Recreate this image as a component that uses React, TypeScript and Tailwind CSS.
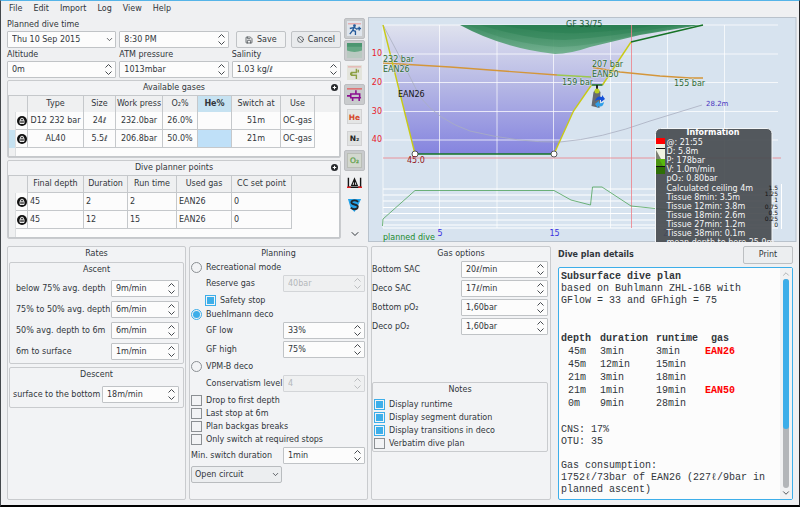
import React from "react";
import { Ban, ChevronDown, ChevronUp, Save } from "lucide-react";

const menus = ["File", "Edit", "Import", "Log", "View", "Help"];

function Spin({ id, value, disabled = false, label }: { id: string; value: string; disabled?: boolean; label?: string }) {
  return (
    <div
      className={
        "flex h-[17px] w-full min-w-0 items-center rounded-[1px] border pr-[3px] pl-1 " +
        (disabled ? "border-[#d3d5d8] bg-[#eff0f1] text-[#b4b7ba]" : "border-[#c0c3c6] bg-[#fcfcfc] text-[#31363b]")
      }
    >
      <input id={id} aria-label={label} defaultValue={value} disabled={disabled} className="w-full min-w-0 flex-1 bg-transparent outline-none" />
      <span className="flex flex-col gap-[3px]">
        <button type="button" aria-label="Increase" disabled={disabled} className="block">
          <svg viewBox="0 0 7 4" className="block h-1 w-[7px]" fill="none" stroke="currentColor" strokeWidth=".9"><path d="M.5 3.500l3-3 3 3" /></svg>
        </button>
        <button type="button" aria-label="Decrease" disabled={disabled} className="block">
          <svg viewBox="0 0 7 4" className="block h-1 w-[7px]" fill="none" stroke="currentColor" strokeWidth=".9"><path d="M.5 .5l3 3 3-3" /></svg>
        </button>
      </span>
    </div>
  );
}

function Field({ id, label, value }: { id: string; label: string; value: string }) {
  return (
    <div className="flex flex-col gap-px">
      <label htmlFor={id} className="leading-[11px]">{label}</label>
      <Spin id={id} value={value} />
    </div>
  );
}

function Group({ title, className = "", children, add = false }: { title: string; className?: string; children?: React.ReactNode; add?: boolean }) {
  return (
    <section className={"min-w-0 rounded-[2px] border border-[#c9cbce] bg-[#f2f3f5] " + className}>
      <div className="relative h-[14px] text-center leading-[14px]">
        <h2>{title}</h2>
        {add && (
          <button type="button" aria-label={"Add to " + title} className="absolute top-[3px] right-[2px]">
            <svg viewBox="0 0 16 16" className="size-[7px]">
              <circle cx="8" cy="8" r="8" fill="#26292c" />
              <path d="M8 4v8M4 8h8" stroke="#fff" strokeWidth="2.5" />
            </svg>
          </button>
        )}
      </div>
      {children}
    </section>
  );
}

function Check({ id, label, checked = false }: { id: string; label: string; checked?: boolean }) {
  return (
    <div className="flex h-[13px] items-center gap-1">
      <input
        id={id}
        type="checkbox"
        defaultChecked={checked}
        className="size-[11px] shrink-0 appearance-none border border-[#8b8f93] bg-clip-content p-px checked:border-[#3daee9] checked:bg-[#3daee9]"
      />
      <label htmlFor={id} className="whitespace-nowrap">{label}</label>
    </div>
  );
}

function Radio({ id, label, checked = false }: { id: string; label: string; checked?: boolean }) {
  return (
    <div className="flex h-[13px] items-center gap-1">
      <input
        id={id}
        type="radio"
        name="deco-mode"
        defaultChecked={checked}
        className="size-[11px] shrink-0 appearance-none rounded-full border border-[#8b8f93] bg-clip-content p-px checked:border-[#3daee9] checked:bg-[#3daee9]"
      />
      <label htmlFor={id}>{label}</label>
    </div>
  );
}

function Trash() {
  return (
    <button type="button" aria-label="Remove row" className="mx-auto block">
      <svg viewBox="0 0 20 20" className="size-[10px]">
        <circle cx="10" cy="10" r="10" fill="#111" />
        <path d="M6 8.500h8v6.500h-8zM7 8V6.500q0-2 3-2t3 2v1.500" fill="none" stroke="#fff" strokeWidth="1.800" />
        <path d="M10 10v4" stroke="#fff" strokeWidth="1.500" />
      </svg>
    </button>
  );
}

const line = "border-r border-b border-[#c5c8cb] ";

function GasTable() {
  const rows = [
    ["D12 232 bar", "24ℓ", "232.0bar", "26.0%", "", "51m", "OC-gas"],
    ["AL40", "5.5ℓ", "206.8bar", "50.0%", "", "21m", "OC-gas"],
  ];
  return (
    <table className="w-full table-fixed border-separate border-spacing-0 border border-[#c5c8cb] bg-[#fcfcfc] text-center whitespace-nowrap">
      <colgroup>
        <col className="w-[7px]" /><col className="w-3" /><col className="w-[56px]" /><col className="w-8" /><col className="w-[47px]" />
        <col className="w-[35px]" /><col className="w-[34px]" /><col className="w-[49px]" /><col className="w-[34px]" /><col />
      </colgroup>
      <thead>
        <tr className="h-[16px]">
          <th className="bg-[#eff0f1]" /><th className="border-r border-[#c5c8cb] bg-[#eff0f1]" />
          {["Type", "Size", "Work press", "O₂%", "He%", "Switch at", "Use"].map((h) => (
            <th key={h} className={"overflow-hidden border-r border-[#c5c8cb] p-0 " + (h === "He%" ? "bg-[#c6e2f1] font-bold" : "bg-[#eff0f1] font-normal")}>
              <span className="-mx-2">{h}</span>
            </th>
          ))}
          <th className="bg-[#eff0f1]" />
        </tr>
      </thead>
      <tbody>
        {rows.map((r, i) => (
          <tr key={r[0]} className="h-[18px]">
            <td className={"border-r border-[#dcdee0] p-0 " + (i === 1 ? "bg-[#c6e2f1]" : "bg-[#eff0f1]")} />
            <td className={line + "p-0"}><Trash /></td>
            {r.map((c, j) => (
              <td key={j} className={line + "p-0 " + (i === 1 && j === 4 ? "bg-[#bfe0f8]" : "")}>{c}</td>
            ))}
            <td />
          </tr>
        ))}
        <tr className="h-2"><td className="border-r border-[#dcdee0] bg-[#eff0f1] p-0" /><td colSpan={9} className="p-0" /></tr>
      </tbody>
    </table>
  );
}

function PointsTable() {
  const rows = [
    ["45", "2", "2", "EAN26", "0"],
    ["45", "12", "15", "EAN26", "0"],
  ];
  return (
    <table className="w-full table-fixed border-separate border-spacing-0 border border-[#c5c8cb] bg-[#fcfcfc] text-left whitespace-nowrap">
      <colgroup>
        <col className="w-[7px]" /><col className="w-3" /><col className="w-[56px]" /><col className="w-[44px]" /><col className="w-[49px]" />
        <col className="w-[55px]" /><col className="w-[60px]" /><col />
      </colgroup>
      <thead>
        <tr className="h-[17px]">
          <th className="bg-[#eff0f1]" /><th className="border-r border-[#c5c8cb] bg-[#eff0f1]" />
          {["Final depth", "Duration", "Run time", "Used gas", "CC set point"].map((h) => (
            <th key={h} className="border-r border-b border-[#c5c8cb] bg-[#eff0f1] p-0 text-center font-normal">{h}</th>
          ))}
          <th className="border-b border-[#dcdee0] bg-[#eff0f1]" />
        </tr>
      </thead>
      <tbody>
        {rows.map((r, i) => (
          <tr key={i} className="h-[18px]">
            <td className="border-r border-[#dcdee0] bg-[#eff0f1] p-0" />
            <td className={line + "p-0"}><Trash /></td>
            {r.map((c, j) => (
              <td key={j} className={line + "p-0 pl-[2px]"}>{c}</td>
            ))}
            <td />
          </tr>
        ))}
        <tr className="h-2"><td className="border-r border-[#dcdee0] bg-[#eff0f1] p-0" /><td colSpan={7} className="p-0" /></tr>
      </tbody>
    </table>
  );
}

function Tool({ label, pressed = false, children }: { label: string; pressed?: boolean; children: React.ReactNode }) {
  return (
    <button
      type="button"
      aria-label={label}
      aria-pressed={pressed}
      className={"flex h-[21px] w-[21px] items-center justify-center rounded-[2px] border " + (pressed ? "border-[#bcbec1] bg-[#c9cbcd]" : "border-transparent")}
    >
      <svg viewBox="0 0 16 16" className="size-[15px]">{children}</svg>
    </button>
  );
}

function Toolbar() {
  return (
    <nav aria-label="Profile options" className="flex flex-col items-center gap-px pt-px">
      <Tool label="Calculated ceiling steps" pressed>
        <rect width="16" height="16" fill="#dfe5ec" />
        <path d="M1 3h14" stroke="#e89090" />
        <circle cx="8" cy="5" r="1.500" fill="#245a9a" />
        <path d="M8 6l-2 4 3 1v4M6 10l-3 4M7 7l-4 1M8 7l3 2M11 8h4M13 6v4" stroke="#245a9a" strokeWidth="1.400" fill="none" />
      </Tool>
      <Tool label="Calculated ceiling" pressed>
        <rect width="16" height="16" fill="#b9c9c1" />
        <path d="M0 0h16v8q-8 3-16 0z" fill="#65a784" />
        <path d="M0 0h16v4H0z" fill="#4b9670" />
      </Tool>
      <Tool label="Tissue ceilings">
        <rect width="16" height="16" fill="#e3e4dc" />
        <path d="M1 2h14" stroke="#e8a0a0" />
        <path d="M10 4v4H5v3h5v4M12 5v3M4 8v3" stroke="#8da044" strokeWidth="1.500" fill="none" />
      </Tool>
      <Tool label="Setpoint" pressed>
        <path d="M0 2h16" stroke="#e65858" strokeWidth="1.300" />
        <path d="M9.500 3.500v4H4v4h11M9.500 7.500h4v4M4 9.500H0M6 12v3M13 12v3" stroke="#8b1090" strokeWidth="1.700" fill="none" />
      </Tool>
      <Tool label="Helium graph">
        <rect x=".5" y=".5" width="15" height="15" fill="#e4e5e5" stroke="#d0d1d2" />
        <text x="8" y="11.500" textAnchor="middle" fontSize="8" fontWeight="bold" fill="#d6492b">He</text>
      </Tool>
      <Tool label="Nitrogen graph">
        <rect x=".5" y=".5" width="15" height="15" fill="#e0e2e2" stroke="#d0d1d2" />
        <text x="8" y="11" textAnchor="middle" fontSize="8" fontWeight="bold" fill="#222">N₂</text>
      </Tool>
      <Tool label="Oxygen graph" pressed>
        <rect x=".5" y=".5" width="15" height="15" fill="#d3d8cf" stroke="#b9bdb5" />
        <text x="8" y="11" textAnchor="middle" fontSize="8" fill="#5fa14a" stroke="#5fa14a" strokeWidth=".3">O₂</text>
      </Tool>
      <Tool label="Ruler">
        <path d="M1.500 3v10h13V3" stroke="#151515" strokeWidth="1.500" fill="none" />
        <path d="M5 11L8 4l3 7zM8 4v7" stroke="#151515" strokeWidth="1.200" fill="none" />
        <path d="M0 13h4M12 13h4" stroke="#e02020" strokeWidth="1.600" />
      </Tool>
      <Tool label="Scale graph">
        <path d="M1 2h14l-4 9-3 5-4-4z" fill="#24a3ea" />
        <path d="M12 5q-4-2.500-7-.5-1.500 2.500 3 3.500 5 1 3 4-3 2.500-7-.5" stroke="#20262c" strokeWidth="2" fill="none" />
      </Tool>
      <button type="button" aria-label="More options" className="mt-3"><ChevronDown className="size-3" strokeWidth={2} /></button>
    </nav>
  );
}

function Profile() {
  const info = ["@: 21:55", "D: 5.8m", "P: 178bar", "V: 1.0m/min", "pO₂: 0.80bar", "Calculated ceiling 4m", "Tissue 8min: 3.5m", "Tissue 12min: 3.8m",
    "Tissue 18min: 2.6m", "Tissue 27min: 1.2m", "Tissue 38min: 0.1m", "mean depth to here 25.9m"];
  const pressures = ["1.5", "1.25", "1", "0.75", "0.5", "0.25", "0"];
  return (
    <svg viewBox="368 17 429 225" className="block h-auto w-full" role="img" aria-label="Dive profile" fontSize="8">
      <defs>
        <linearGradient id="water" x1="0" y1="0" x2="0" y2="1">
          <stop offset="0" stopColor="#dfe2ee" />
          <stop offset=".45" stopColor="#b7b9e5" />
          <stop offset="1" stopColor="#8584df" />
        </linearGradient>
        <linearGradient id="ceiling" x1="0" y1="0" x2="0" y2="1">
          <stop offset="0" stopColor="#2c8454" />
          <stop offset="1" stopColor="#6bae88" />
        </linearGradient>
      </defs>
      <rect x="368.5" y="17.5" width="427.500" height="224" fill="#d7e3ef" stroke="#b9c2cc" />
      <path d="M383 25L415 154H554L573.500 111L591.500 85H602.500L631 42L703 25Z" fill="url(#water)" />
      <path d="M383 25H778M383 54H778M383 82.500H778M383 111.500H778M383 140H778" stroke="#fff" strokeOpacity=".75" />
      <path d="M383 25V228M439.500 25V228M497 25V228M553.500 25V228M610.500 25V228M667.500 25V228M724.500 25V228" stroke="#fff" strokeOpacity=".7" />
      <path d="M383 189H778M383 195H778M383 201H778M383 207.500H778M383 213.500H778M383 220H778M383 225H778M383 228H778M781.500 184V229" stroke="#fff" />
      <path d="M460 25Q502 48 555 54Q570 54 590 47L640 35L700 25Z" fill="url(#ceiling)" fillOpacity=".9" />
      <path d="M468 25Q510 44 560 47Q590 46 630 36L690 25Z" fill="#2b7f50" fillOpacity=".25" />
      <path d="M480 25Q530 40 565 40Q610 37 680 25Z" fill="#1f774a" fillOpacity=".3" />
      <path d="M500 25Q550 35 580 33Q620 31 660 25Z" fill="#1f774a" fillOpacity=".3" />
      <path d="M383 25Q403 62 420 97Q438 120 470 131Q520 143 560 142Q600 139 650 121L702 105" fill="none" stroke="#a9afc0" strokeWidth=".8" />
      <path d="M383 158H781M631.500 25V228" stroke="#ee7f86" strokeWidth=".8" />
      <g fill="none" strokeWidth="1.400">
        <path d="M383 63L450 67L557 75M593 67.500L620 72L660 76L690 78H703" stroke="#d4963a" />
        <path d="M557 75L591 77" stroke="#9cc84d" />
        <path d="M383 25L415 154M554 154L573.500 111L591.500 85M602.500 85L631 42" stroke="#c9ca16" />
        <path d="M415 154H554M591.500 85H602.500M631 42L703 25" stroke="#167326" />
      </g>
      <path d="M382.500 226L383 219L415 190.500H554L571 200L590.500 205L592.500 187H602L631 206L700 213" fill="none" stroke="#4fa35a" strokeWidth=".8" />
      <circle cx="415" cy="154" r="3" fill="#fff" stroke="#333" strokeWidth=".8" />
      <circle cx="554" cy="154" r="3" fill="#fff" stroke="#333" strokeWidth=".8" />
      <g fill="#e8202c" textAnchor="end">
        <text x="382" y="56">10</text><text x="382" y="85">20</text><text x="382" y="114">30</text><text x="382" y="142">40</text>
      </g>
      <g fill="#2f6b38" stroke="#e4edf0" strokeWidth="1" strokeOpacity=".7" paintOrder="stroke">
        <text x="383" y="62">232 bar</text>
        <text x="383" y="72">EAN26</text>
        <text x="562" y="85">159 bar</text>
        <text x="592" y="66.500">207 bar</text>
        <text x="592" y="76.500">EAN50</text>
        <text x="674" y="86">155 bar</text>
      </g>
      <text x="566" y="27" fill="#1c5c3a">GF 33/75</text>
      <text x="398" y="97" fill="#151515">EAN26</text>
      <text x="407" y="163" fill="#941720">45.0</text>
      <text x="706" y="106" fontSize="7" fill="#4a35c0">28.2m</text>
      <g fill="#3a30e0" textAnchor="middle"><text x="440" y="236">5</text><text x="554.500" y="236">15</text><text x="668" y="236">25</text></g>
      <text x="383" y="240" fill="#218a2c">planned dive</text>
      <g>
        <path d="M597 85v5" stroke="#222" strokeWidth="2" />
        <path d="M593.500 92q3.500-5 7 0l-1 16-8-2z" fill="#666a70" />
        <circle cx="597" cy="91" r="2.500" fill="#b9cf20" />
        <path d="M595 101q2-6 7-4v-2l3 4-4 3v-2q-3-1-6 1" fill="#1450d8" />
        <path d="M604 102q-1 6-6 4v2l-3-4 4-3v2q2 1 5-1" fill="#2f9fe8" />
      </g>
      <rect x="655.500" y="128.500" width="116.500" height="120" rx="5" fill="#484c50" fillOpacity=".92" stroke="#f3f6f8" />
      <g>
        <rect x="656" y="138" width="9" height="6" fill="#f00" />
        <rect x="656" y="144" width="9" height="15" fill="#eff3e3" />
        <path d="M656 148.500h9" stroke="#111" />
        <path d="M656 150l5 9h-5z" fill="#7c8074" />
        <rect x="656" y="159" width="9" height="7" fill="#57b90e" />
        <path d="M656 159h3l4 7h-7z" fill="#4b9412" />
        <rect x="656" y="166" width="9" height="8" fill="#2f6f07" />
        <path d="M656 166.500h9" stroke="#111" />
      </g>
      <text x="713" y="135" textAnchor="middle" fontWeight="bold" fill="#fff">Information</text>
      <g fill="#f5f6f7">
        {info.map((t, i) => <text key={t} x="666.500" y={145 + i * 9.100}>{t}</text>)}
      </g>
      <g fill="#111" fontSize="6" textAnchor="end">
        {pressures.map((t, i) => <text key={t} x="778" y={190 + i * 6.200}>{t}</text>)}
      </g>
    </svg>
  );
}

function Rate({ id, label, value, wide = false }: { id: string; label: string; value: string; wide?: boolean }) {
  return (
    <div className={"grid items-center whitespace-nowrap " + (wide ? "grid-cols-[1fr_77px] pl-[3px]" : "grid-cols-[1fr_68px] pl-[6px]")}>
      <label htmlFor={id}>{label}</label>
      <Spin id={id} value={value} />
    </div>
  );
}

function PlanRow({ id, label, value, indent = true, disabled = false }: { id: string; label: string; value: string; indent?: boolean; disabled?: boolean }) {
  return (
    <div className={"grid grid-cols-[1fr_82px] items-center whitespace-nowrap " + (indent ? "pl-[15px]" : "")}>
      <label htmlFor={id}>{label}</label>
      <Spin id={id} value={value} disabled={disabled} />
    </div>
  );
}

function Planning() {
  return (
    <Group title="Planning">
      <div className="flex flex-col pr-[2px] pl-px">
        <Radio id="recreational" label="Recreational mode" />
        <div className="pt-px"><PlanRow id="reserve" label="Reserve gas" value="40bar" disabled /></div>
        <div className="pt-[2px] pb-px pl-[14px]"><Check id="safety" label="Safety stop" checked /></div>
        <Radio id="buehlmann" label="Buehlmann deco" checked />
        <div className="flex flex-col gap-[2px] pt-px pb-[2px]">
          <PlanRow id="gflow" label="GF low" value="33%" />
          <PlanRow id="gfhigh" label="GF high" value="75%" />
        </div>
        <Radio id="vpmb" label="VPM-B deco" />
        <div className="pt-[2px] pb-[2px]"><PlanRow id="conservatism" label="Conservatism level" value="4" disabled /></div>
        <Check id="drop" label="Drop to first depth" />
        <Check id="last" label="Last stop at 6m" />
        <Check id="backgas" label="Plan backgas breaks" />
        <Check id="required" label="Only switch at required stops" />
        <div className="pt-px"><PlanRow id="minswitch" label="Min. switch duration" value="1min" indent={false} /></div>
        <div className="relative mt-[2px] w-[91px]">
          <select aria-label="Circuit type" className="h-[17px] w-full appearance-none rounded-[2px] border border-[#b9bcbf] bg-[#eceef0] px-[3px]">
            <option>Open circuit</option>
          </select>
          <ChevronDown className="pointer-events-none absolute top-1 right-[2px] size-[9px]" />
        </div>
      </div>
    </Group>
  );
}

function GasOptions() {
  const rows = [["Bottom SAC", "20ℓ/min"], ["Deco SAC", "17ℓ/min"], ["Bottom pO₂", "1,60bar"], ["Deco pO₂", "1,60bar"]];
  return (
    <Group title="Gas options">
      <div className="flex flex-col gap-[2px] pr-[2px]">
        {rows.map(([label, value]) => (
          <div key={label} className="grid grid-cols-[1fr_87px] items-center">
            <label htmlFor={label}>{label}</label>
            <Spin id={label} value={value} />
          </div>
        ))}
      </div>
      <Group title="Notes" className="mr-[2px] mt-[47px] pb-px">
        <div className="pt-px pl-px">
          <Check id="runtime" label="Display runtime" checked />
          <Check id="segment" label="Display segment duration" checked />
          <Check id="transitions" label="Display transitions in deco" checked />
          <Check id="verbatim" label="Verbatim dive plan" />
        </div>
      </Group>
    </Group>
  );
}

function Details() {
  const rows = [["45m", "3min", "3min", "EAN26"], ["45m", "12min", "15min", ""], ["21m", "3min", "18min", ""], ["21m", "1min", "19min", "EAN50"], ["0m", "9min", "28min", ""]];
  return (
    <section className="flex min-w-0 flex-col pr-1 pl-1">
      <div className="flex h-[18px] items-center justify-between">
        <h2 className="font-bold">Dive plan details</h2>
        <button type="button" className="h-[18px] w-[50px] rounded-[2px] border border-[#bcbfc2] bg-[#eceef0]">Print</button>
      </div>
      <div className="mt-[3px] flex flex-1 rounded-[2px] border border-[#3daee9] bg-[#fcfcfc]">
        <div className="min-w-0 flex-1 py-[3px] pl-[2px] font-['Liberation_Mono',monospace] text-[10px] leading-3">
          <p className="font-bold">Subsurface dive plan</p>
          <p>based on Buhlmann ZHL-16B with<br />GFlow = 33 and GFhigh = 75</p>
          <table className="mt-[25px] border-separate border-spacing-0 text-left leading-[13px]">
            <thead>
              <tr>
                <th className="w-[39px] p-0">depth</th><th className="w-[56px] p-0">duration</th><th className="w-[49px] p-0">runtime</th><th className="w-[30px] p-0 text-center">gas</th>
              </tr>
            </thead>
            <tbody>
              {rows.map((r, i) => (
                <tr key={i}>
                  <td className="p-0 pl-[7px]">{r[0]}</td><td className="p-0">{r[1]}</td><td className="p-0">{r[2]}</td><td className="p-0 font-bold text-[#f00]">{r[3]}</td>
                </tr>
              ))}
            </tbody>
          </table>
          <p className="mt-[14px]">CNS: 17%<br />OTU: 35</p>
          <p className="mt-3">Gas consumption:<br />1752ℓ/73bar of EAN26 (227ℓ/9bar in planned ascent)</p>
        </div>
        <div className="flex w-3 flex-col items-center bg-[#f1f2f3] py-px">
          <ChevronUp className="size-[10px] text-[#a5a8ab]" />
          <div className="flex w-[6px] flex-1 flex-col rounded-full bg-[#b3b6b9]"><div className="h-[72%] rounded-full bg-[#3daee9]" /></div>
          <ChevronDown className="size-[10px]" />
        </div>
      </div>
    </section>
  );
}

export default function App() {
  return (
    <div className="flex min-h-screen flex-col border-t border-r border-b-2 border-l border-t-[#55b4e8] border-r-[#26282b] border-b-black border-l-[#43474b] bg-[#eff0f2] font-['DejaVu_Sans',sans-serif] text-[8px] leading-[10px] text-[#31363b]">
      <nav aria-label="Main menu" className="flex h-4 items-center gap-[11px] pl-2">
        {menus.map((m) => <button key={m} type="button">{m}</button>)}
      </nav>
      <div className="grid grid-cols-[334fr_21px_429fr] gap-[3px] pr-[2px] pl-[6px]">
        <div className="flex min-w-0 flex-col gap-[2px] pt-[2px]">
          <div className="grid grid-cols-3 gap-x-[3px] gap-y-px">
            <div className="flex flex-col gap-px">
              <label htmlFor="date" className="leading-[11px]">Planned dive time</label>
              <div className="relative">
                <select id="date" className="h-[17px] w-full appearance-none rounded-[1px] border border-[#c0c3c6] bg-[#fcfcfc] px-1">
                  <option>Thu 10 Sep 2015</option>
                </select>
                <ChevronDown className="pointer-events-none absolute top-1 right-[2px] size-[9px]" />
              </div>
            </div>
            <div className="self-end"><Spin id="time" label="Time" value="8:30 PM" /></div>
            <div className="flex gap-[5px] self-end pl-1">
              <button type="button" className="flex h-[17px] flex-1 items-center justify-center gap-1 rounded-[2px] border border-[#c0c3c6] bg-[#f1f2f3]"><Save className="size-2" />Save</button>
              <button type="button" className="flex h-[17px] flex-1 items-center justify-center gap-1 rounded-[2px] border border-[#c0c3c6] bg-[#e9ebed]"><Ban className="size-[7px]" />Cancel</button>
            </div>
            <Field id="altitude" label="Altitude" value="0m" />
            <Field id="atm" label="ATM pressure" value="1013mbar" />
            <Field id="salinity" label="Salinity" value="1.03 kg/ℓ" />
          </div>
          <Group title="Available gases" add><GasTable /></Group>
          <Group title="Dive planner points" add><PointsTable /></Group>
        </div>
        <Toolbar />
        <Profile />
      </div>
      <div className="grid flex-1 grid-cols-[179fr_179fr_180fr_243fr] gap-[3px] pt-1 pr-[2px] pb-[5px] pl-[6px]">
        <Group title="Rates">
          <div className="flex flex-col gap-[3px] px-px pt-px">
            <Group title="Ascent">
              <div className="flex flex-col gap-1 pt-[3px] pr-1 pb-[3px]">
                <Rate id="r75" label="below 75% avg. depth" value="9m/min" />
                <Rate id="r50" label="75% to 50% avg. depth" value="6m/min" />
                <Rate id="r6" label="50% avg. depth to 6m" value="6m/min" />
                <Rate id="rs" label="6m to surface" value="1m/min" />
              </div>
            </Group>
            <Group title="Descent">
              <div className="pt-[4px] pr-1 pb-[4px]"><Rate id="rd" label="surface to the bottom" value="18m/min" wide /></div>
            </Group>
          </div>
        </Group>
        <Planning />
        <GasOptions />
        <Details />
      </div>
    </div>
  );
}
